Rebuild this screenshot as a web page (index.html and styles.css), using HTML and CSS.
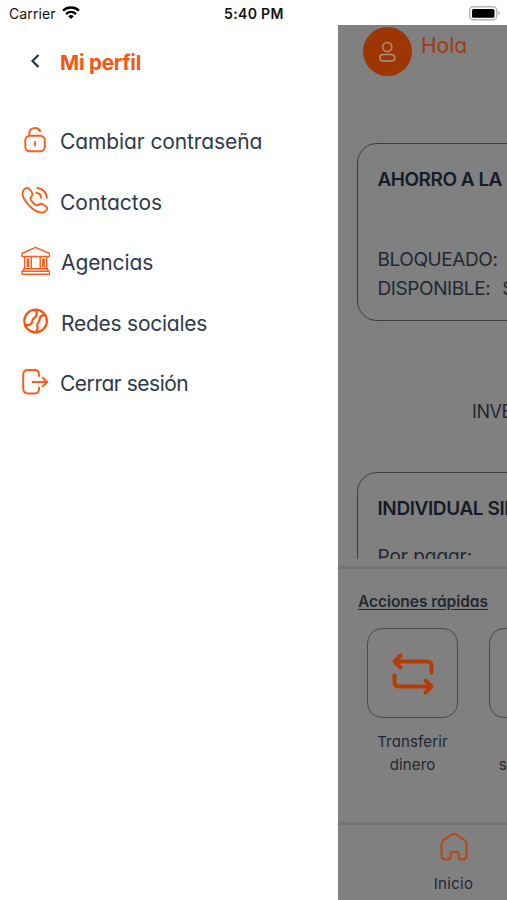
FILE: index.html
```html
<!DOCTYPE html>
<html lang="es">
<head>
<meta charset="utf-8">
<meta name="viewport" content="width=device-width, initial-scale=1">
<title>Mi perfil</title>
<link rel="stylesheet" href="styles.css">
</head>
<body>
<header class="status">
  <span class="carrier">Carrier</span>
  <svg class="wifi" width="18" height="13" viewBox="0 0 18 13" fill="none" stroke="#000" stroke-width="2.4"><path d="M1 4.600C5.500.5 12.500.5 17 4.600M4 8C7 5.300 11 5.300 14 8"/><path d="M6.200 10.200Q9 8 11.800 10.200L9 13z" fill="#000" stroke="none"/></svg>
  <time class="clock">5:40 PM</time>
  <svg class="battery" width="32" height="15" viewBox="0 0 32 15"><rect x=".7" y=".8" width="27" height="13" rx="3.500" fill="#fff" stroke="#b5b5b5" stroke-width="1.400"/><rect x="3" y="3" width="22.500" height="8.700" rx="1.500"/><path d="M29.300 5v4.500q1.700-.6 1.700-2.250T29.300 5z" fill="#b5b5b5"/></svg>
</header>
<div class="app">
  <nav class="drawer">
    <div class="drawer-head">
      <svg width="12" height="16" viewBox="0 0 12 16" fill="none" stroke="#26344a" stroke-width="2.200"><path d="M9.500 2 3.500 8l6 6"/></svg>
      <h1 class="title">Mi perfil</h1>
    </div>
    <ul class="menu">
      <li><svg class="icon" viewBox="0 0 30 30"><rect x="5.300" y="10.800" width="19.500" height="15.500" rx="4.500"/><path d="M9.300 10.800V8.500c0-6.200 8.300-7.300 10.900-2.300M15 17v3.500"/></svg><span class="label l1">Cambiar contraseña</span></li>
      <li><svg class="icon" viewBox="0 0 30 30"><path d="M4 4.600c2-2.200 4.300-2.500 6 .1l1.900 2.800c1 1.800.6 2.900-.8 4.300-1.200 1.200-1 2 .1 3.700 1.200 1.900 2.700 3.300 4.400 4.300 1.700 1 2.400.8 3.600-.2 1.200-1 2.600-1 4-.1l2.500 1.700c2.300 1.700 1.900 3.400-.2 5.100-4.500 3.700-12.700-1.500-16.800-6.200C4.200 15 .2 8.700 4 4.600zM16.500 8c2.700.1 4.500 1.900 4.600 4.600M17.200 3c5.500.3 9.300 4.400 9.700 9.600"/></svg><span class="label l2">Contactos</span></li>
      <li><svg class="icon bank" viewBox="0 0 30 30"><path d="M2 7.500 15.500 1.300 29.500 7.500v3H2zM2 25.200h27.500v3H2zM3.800 22.800h23.900v2.400H3.800zM4.800 10.500v12.300M11.300 10.500v12.300M20.200 10.500v12.300M26.700 10.500v12.300"/><path d="M8.050 12.500v8.500M23.450 12.500v8.500" stroke-width="2.800" stroke-linecap="butt"/></svg><span class="label l3">Agencias</span></li>
      <li><svg class="icon globe" viewBox="0 0 30 30"><circle cx="15.600" cy="15" r="11.300"/><path d="M15.300 4c2.200 2.600 1.900 4.300.6 6.400-.9 1.500-3 1.800-3.400 4-.5 2.700-1.600 4.300-3.500 4.400-1.500.1-2.500.5-4 .7M25.200 9.200c-3.500-.1-5.300 1.300-5.500 3.600-.2 2.200-.4 3.100-1.800 4.400-2 1.800.1 3.100-.3 5-.3 1.300-1.200 2.200-1 3.800"/></svg><span class="label l4">Redes sociales</span></li>
      <li><svg class="icon" viewBox="0 0 30 30"><path d="M19 9V7.500Q19 3 14.500 3H8.200Q3.200 3 3.200 8v13.500q0 5 5 5h6.300q4.500 0 4.500-4.500V20.500M12.500 15h14.700M22.700 10.700l4.500 4.300-4.500 4.300"/></svg><span class="label l5">Cerrar sesión</span></li>
    </ul>
  </nav>
  <main class="home">
    <div class="scroll">
      <div class="user">
        <span class="avatar"><svg width="18" height="22" viewBox="0 0 18 22" fill="none" stroke="#a7947f" stroke-width="1.500"><circle cx="8.300" cy="6" r="4.600"/><rect x=".9" y="13.500" width="14.800" height="6.600" rx="3.300"/></svg></span>
        <span class="hello">Hola</span>
      </div>
      <section class="card savings">
        <h2 class="c1">AHORRO A LA</h2>
        <p class="row"><span class="b1">BLOQUEADO:</span></p>
        <p class="row"><span class="b2">DISPONIBLE:</span><span>S/</span></p>
      </section>
      <p class="invest">INVERSIONES</p>
      <section class="card loan">
        <h2 class="c2">INDIVIDUAL SIMPLE</h2>
        <p class="pay">Por pagar:</p>
      </section>
    </div>
    <section class="quick">
      <h3><span>Acciones rápidas</span></h3>
      <div class="actions">
        <div class="action">
          <div class="tile"><svg width="42" height="44" viewBox="0 0 42 44" fill="none" stroke="#b63c05" stroke-width="4" stroke-linecap="round" stroke-linejoin="round"><path d="M8.500 3.500 2.500 9.500l6 6M3 9.500h32q4.500 0 4.500 4.500v6.500M2.500 23.500V30q0 4.500 4.500 4.500h32M33.500 28.500l6 6-6 6"/></svg></div>
          <p><span class="t1">Transferir</span><br><span class="t2">dinero</span></p>
        </div>
        <div class="action">
          <div class="tile"></div>
          <p class="wide">Pagar<br>servicios</p>
        </div>
      </div>
    </section>
    <footer class="tabs">
      <div class="tab">
        <svg width="28" height="29" viewBox="0 0 28 29" fill="none" stroke="#bd450d" stroke-width="1.900" stroke-linejoin="round"><path d="M1.500 11.700q0-2 1.600-3.100L11.500 2.500q2.500-1.800 5 0l8.400 6.100q1.600 1.100 1.600 3.100v11.800q0 4-4 4h-1q-3 0-3-3v-2.300q0-2.200-2.200-2.200h-3.600q-2.200 0-2.200 2.200v2.300q0 3-3 3h-2q-4 0-4-4z"/></svg>
        <span>Inicio</span>
      </div>
    </footer>
  </main>
</div>
</body>
</html>
```
FILE: styles.css
```css
* { box-sizing: border-box; }
body {
  margin: 0;
  height: 900px;
  overflow: hidden;
  display: flex;
  flex-direction: column;
  background: #fff;
  font-family: Inter, "Liberation Sans", sans-serif;
  color: #2f3a4c;
}
h1, h2, h3, p, ul { margin: 0; padding: 0; font-weight: 400; }
svg { display: block; flex: none; }

.status {
  height: 25px;
  flex: none;
  display: grid;
  grid-template-columns: 53px 171px 1fr 32px;
  align-items: center;
  padding: 2px 5px 0 9px;
  color: #111;
  font-size: 14px;
  line-height: 23px;
}
.carrier { letter-spacing: .1px; }
.wifi { margin-top: -2px; }
.clock { font-weight: 600; margin-left: -9px; letter-spacing: .35px; }
.battery { margin: -1px 0 0 -1px; }

.app { flex: 1; min-height: 0; display: flex; }
.drawer { width: 338px; flex: none; background: #fff; font-feature-settings: "cv11"; }
.drawer-head {
  display: flex;
  align-items: center;
  height: 74px;
  padding-left: 29px;
  gap: 19px;
}
.drawer-head svg { margin-top: -3px; }
.title { font-size: 20.500px; font-weight: 700; color: #fa5514; letter-spacing: -.2px; }
.menu { list-style: none; padding: 12px 0 0 20px; }
.menu li { height: 60.500px; display: flex; align-items: center; gap: 10px; }
.icon {
  width: 30px;
  height: 30px;
  margin-top: -3px;
  fill: none;
  stroke: #fa5c1c;
  stroke-width: 1.900;
  stroke-linecap: round;
  stroke-linejoin: round;
}
.bank { stroke-width: 1.400; }
.globe { stroke: #f85410; stroke-width: 2.200; }
.label { font-size: 21px; line-height: 26px; padding-top: 1px; white-space: nowrap; }
.l1 { letter-spacing: -.1px; }
.l2, .l4 { padding-top: 2px; }
.l3 { margin-left: 1px; letter-spacing: -.1px; }
.l4 { margin-left: 1px; letter-spacing: -.25px; }
.l5 { letter-spacing: -.48px; }

.home {
  flex: 1;
  min-width: 0;
  overflow: hidden;
  display: flex;
  flex-direction: column;
  background: #808080;
  color: #222831;
}
.scroll { height: 534px; flex: none; overflow: hidden; padding: 2px 0 0 19px; }
.user { display: flex; padding-left: 6px; height: 116px; gap: 9px; }
.avatar {
  width: 49px;
  height: 49px;
  flex: none;
  border-radius: 50%;
  background: #9d3600;
  display: grid;
  place-items: center;
}
.hello { font-size: 21px; line-height: 25px; margin-top: 6px; color: #9f3c14; font-feature-settings: "cv11"; }
.card {
  width: 400px;
  border: 1.500px solid #3b3d40;
  border-radius: 20px;
  padding: 22px 19.500px 0;
  white-space: nowrap;
}
.card h2 { font-size: 19px; line-height: 28px; font-weight: 600; color: #161b27; }
.savings { height: 178px; }
.savings h2 { margin-bottom: 51px; }
.c1 { letter-spacing: -.5px; }
.c2 { letter-spacing: -.4px; }
.row { display: flex; gap: 12px; font-size: 19px; line-height: 29px; }
.b1, .b2 { letter-spacing: -.4px; }
.invest { padding: 77px 0 0 115px; font-size: 18px; line-height: 28px; white-space: nowrap; letter-spacing: -.4px; }
.loan { height: 200px; margin-top: 46px; }
.pay { margin-top: 20px; font-size: 19px; line-height: 28px; letter-spacing: -.05px; font-feature-settings: "cv11"; }

.quick {
  height: 264px;
  margin-top: 7px;
  flex: none;
  border-top: 3px solid #747474;
  padding: 21px 0 0 20px;
  font-feature-settings: "cv11";
}
.quick h3 { font-size: 15.500px; line-height: 24px; font-weight: 600; text-decoration: underline; text-underline-offset: 2px; white-space: nowrap; letter-spacing: -.05px; }
.actions { display: flex; gap: 31px; padding: 14px 0 0 9px; }
.action { width: 91px; flex: none; }
.tile {
  height: 90px;
  border: 1px solid #4a4a4a;
  border-radius: 15px;
  display: grid;
  place-items: center;
}
.tile svg { margin: 2px 0 0 0; }
.action p { margin-top: 12px; text-align: center; font-size: 15px; line-height: 23px; letter-spacing: .15px; }
.action .wide { letter-spacing: .85px; }

.tabs { flex: 1; border-top: 3px solid #747474; margin-top: -8px; }
.tab { display: flex; flex-direction: column; align-items: center; gap: 11px; padding: 7px 0 0 62px; font-size: 15px; line-height: 24px; letter-spacing: .3px; }
```
